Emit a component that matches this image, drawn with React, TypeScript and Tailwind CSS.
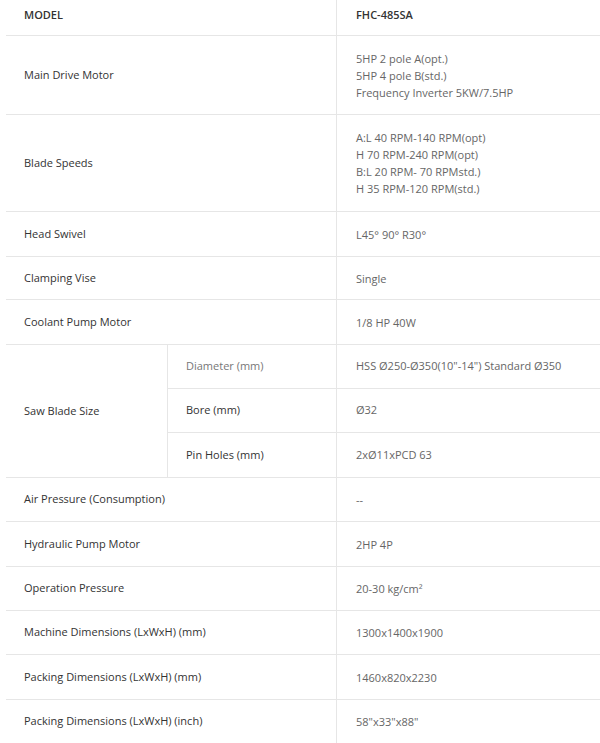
const rows: { label: string; values: string[]; h: string }[] = [
    { label: "Main Drive Motor", values: ["5HP 2 pole A(opt.)", "5HP 4 pole B(std.)", "Frequency Inverter 5KW/7.5HP"], h: "h-[79px]" },
    { label: "Blade Speeds", values: ["A:L 40 RPM-140 RPM(opt)", "H 70 RPM-240 RPM(opt)", "B:L 20 RPM- 70 RPMstd.)", "H 35 RPM-120 RPM(std.)"], h: "h-[97px]" },
    { label: "Head Swivel", values: ["L45° 90° R30°"], h: "h-[45px]" },
    { label: "Clamping Vise", values: ["Single"], h: "h-[43px]" },
    { label: "Coolant Pump Motor", values: ["1/8 HP 40W"], h: "h-[45px]" },
];

const rowsAfter: { label: string; values: string[]; h: string }[] = [
    { label: "Air Pressure (Consumption)", values: ["--"], h: "h-[44px]" },
    { label: "Hydraulic Pump Motor", values: ["2HP 4P"], h: "h-[45px]" },
    { label: "Operation Pressure", values: ["20-30 kg/cm²"], h: "h-[44px]" },
    { label: "Machine Dimensions (LxWxH) (mm)", values: ["1300x1400x1900"], h: "h-[44px]" },
    { label: "Packing Dimensions (LxWxH) (mm)", values: ["1460x820x2230"], h: "h-[45px]" },
    { label: "Packing Dimensions (LxWxH) (inch)", values: ["58\"x33\"x88\""], h: "h-[44px]" },
];

const sub = [
    { label: "Diameter (mm)", value: "HSS Ø250-Ø350(10\"-14\") Standard Ø350", light: true },
    { label: "Bore (mm)", value: "Ø32", light: false },
    { label: "Pin Holes (mm)", value: "2xØ11xPCD 63", light: false },
];

const Row = ({ label, values, h }: { label: string; values: string[]; h: string }) => (
    <div className={`flex border-b border-[#e6e6e6] ${h}`}>
        <div className="w-[330px] pl-[18px] flex items-center text-[#333] font-medium">{label}</div>
        <div className="flex-1 border-l border-[#e6e6e6] pl-[19px] flex flex-col justify-center leading-[17px] text-[#666]">
            {values.map((v) => (
                <span key={v}>{v}</span>
            ))}
        </div>
    </div>
);

const App = () => {
    return (
        <div className="w-[600px] h-[743px] overflow-hidden bg-white pl-[6px] text-[11px]" style={{ fontFamily: "'Open Sans', 'Liberation Sans', sans-serif" }}>
            <div className="flex border-b border-[#e6e6e6] h-[36px]">
                <div className="w-[330px] pl-[18px] pb-[4px] flex items-center text-[#333] font-semibold">MODEL</div>
                <div className="flex-1 border-l border-[#e6e6e6] pl-[19px] pb-[4px] flex items-center text-[#333] font-semibold">FHC-485SA</div>
            </div>
            {rows.map((r) => (
                <Row key={r.label} {...r} />
            ))}
            <div className="flex border-b border-[#e6e6e6]">
                <div className="w-[161px] pl-[18px] flex items-center text-[#333] font-medium">Saw Blade Size</div>
                <div className="flex-1 flex flex-col">
                    {sub.map((s, i) => (
                        <div key={s.label} className={`flex h-[44px] ${i < 2 ? "border-b border-[#e6e6e6]" : ""}`}>
                            <div className={`w-[169px] border-l border-[#e6e6e6] pl-[18px] flex items-center ${s.light ? "text-[#777]" : "text-[#333] font-medium"}`}>{s.label}</div>
                            <div className="flex-1 border-l border-[#e6e6e6] pl-[19px] flex items-center text-[#666]">{s.value}</div>
                        </div>
                    ))}
                </div>
            </div>
            {rowsAfter.map((r) => (
                <Row key={r.label} {...r} />
            ))}
        </div>
    );
};

export default App;
